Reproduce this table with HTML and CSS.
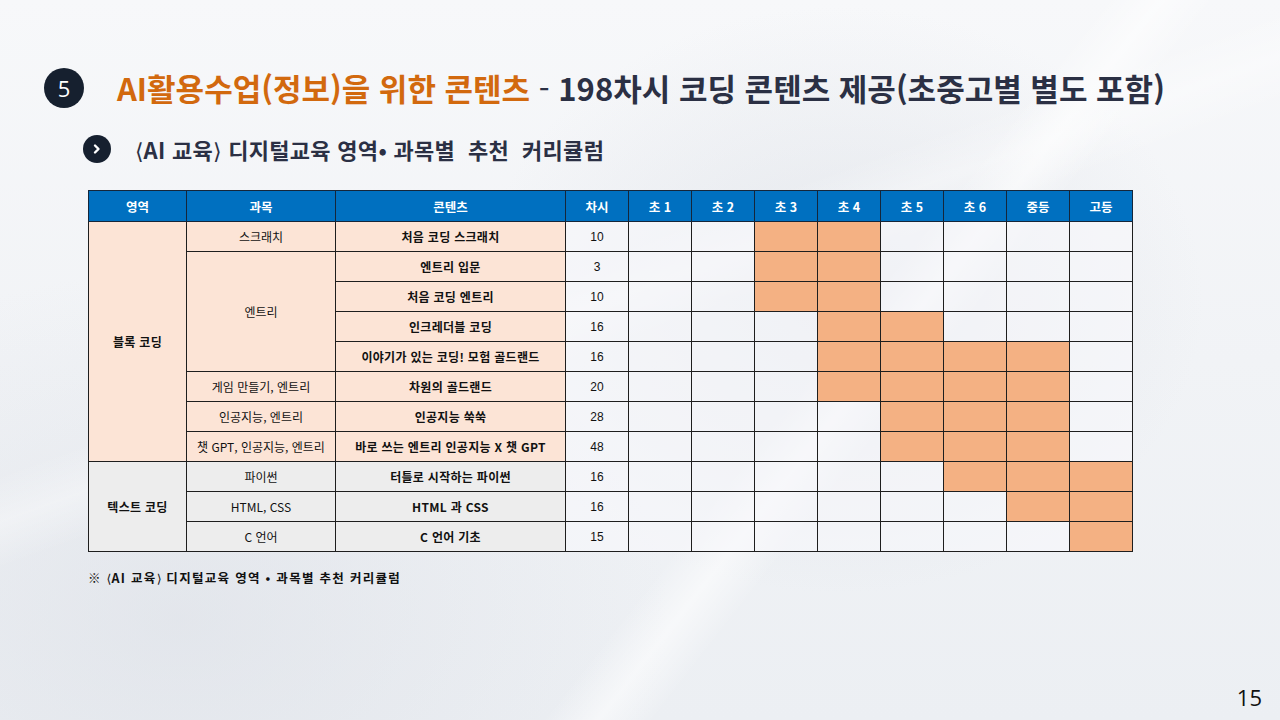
FILE: index.html
```html
<!DOCTYPE html>
<html lang="ko">
<head>
<meta charset="utf-8">
<link rel="stylesheet" href="styles.css">
</head>
<body>
<div class="slide">
  <div class="bg-deco"></div>
  <header class="title-row">
    <span class="num-badge">5</span>
    <h1 class="title"><span class="accent">AI활용수업(정보)을 위한 콘텐츠</span> <span class="dash">-</span> 198차시 코딩 콘텐츠 제공(초중고별 별도 포함)</h1>
  </header>
  <div class="sub-row">
    <span class="chev-badge"><svg width="12" height="12" viewBox="0 0 12 12"><path d="M4 2.5 L7.5 6 L4 9.5" fill="none" stroke="#fff" stroke-width="2.4" stroke-linecap="round" stroke-linejoin="round"/></svg></span>
    <h2 class="subtitle"><span class="br">⟨</span>AI 교육<span class="br">⟩</span> 디지털교육 영역• 과목별&nbsp; 추천&nbsp; 커리큘럼</h2>
  </div>
  <table class="grid">
    <colgroup>
      <col class="c-area"><col class="c-subj"><col class="c-cont"><col class="c-n">
      <col class="c-g"><col class="c-g"><col class="c-g"><col class="c-g"><col class="c-g"><col class="c-g"><col class="c-g"><col class="c-g">
    </colgroup>
    <thead>
      <tr><th>영역</th><th>과목</th><th>콘텐츠</th><th>차시</th><th>초 1</th><th>초 2</th><th>초 3</th><th>초 4</th><th>초 5</th><th>초 6</th><th>중등</th><th>고등</th></tr>
    </thead>
    <tbody>
      <tr><td class="pk b" rowspan="8">블록 코딩</td><td class="pk">스크래치</td><td class="pk b">처음 코딩 스크래치</td><td class="n">10</td><td></td><td></td><td class="on"></td><td class="on"></td><td></td><td></td><td></td><td></td></tr>
      <tr><td class="pk" rowspan="4">엔트리</td><td class="pk b">엔트리 입문</td><td class="n">3</td><td></td><td></td><td class="on"></td><td class="on"></td><td></td><td></td><td></td><td></td></tr>
      <tr><td class="pk b">처음 코딩 엔트리</td><td class="n">10</td><td></td><td></td><td class="on"></td><td class="on"></td><td></td><td></td><td></td><td></td></tr>
      <tr><td class="pk b">인크레더블 코딩</td><td class="n">16</td><td></td><td></td><td></td><td class="on"></td><td class="on"></td><td></td><td></td><td></td></tr>
      <tr><td class="pk b">이야기가 있는 코딩! 모험 골드랜드</td><td class="n">16</td><td></td><td></td><td></td><td class="on"></td><td class="on"></td><td class="on"></td><td class="on"></td><td></td></tr>
      <tr><td class="pk">게임 만들기, 엔트리</td><td class="pk b">차원의 골드랜드</td><td class="n">20</td><td></td><td></td><td></td><td class="on"></td><td class="on"></td><td class="on"></td><td class="on"></td><td></td></tr>
      <tr><td class="pk">인공지능, 엔트리</td><td class="pk b">인공지능 쑥쑥</td><td class="n">28</td><td></td><td></td><td></td><td></td><td class="on"></td><td class="on"></td><td class="on"></td><td></td></tr>
      <tr><td class="pk">챗 GPT, 인공지능, 엔트리</td><td class="pk b">바로 쓰는 엔트리 인공지능 X 챗 GPT</td><td class="n">48</td><td></td><td></td><td></td><td></td><td class="on"></td><td class="on"></td><td class="on"></td><td></td></tr>
      <tr><td class="gy b" rowspan="3">텍스트 코딩</td><td class="gy">파이썬</td><td class="gy b">터틀로 시작하는 파이썬</td><td class="n">16</td><td></td><td></td><td></td><td></td><td></td><td class="on"></td><td class="on"></td><td class="on"></td></tr>
      <tr><td class="gy">HTML, CSS</td><td class="gy b">HTML 과 CSS</td><td class="n">16</td><td></td><td></td><td></td><td></td><td></td><td></td><td class="on"></td><td class="on"></td></tr>
      <tr><td class="gy">C 언어</td><td class="gy b">C 언어 기초</td><td class="n">15</td><td></td><td></td><td></td><td></td><td></td><td></td><td></td><td class="on"></td></tr>
    </tbody>
  </table>
  <p class="note">※ <span class="br">⟨</span>AI 교육<span class="br">⟩</span> 디지털교육 영역 • 과목별 추천 커리큘럼</p>
  <div class="page-num">15</div>
</div>
</body>
</html>
```

FILE: styles.css
```css
* { box-sizing: border-box; }
html, body { margin: 0; padding: 0; }
body {
  width: 1280px;
  height: 720px;
  overflow: hidden;
  font-family: "Noto Sans CJK KR", "Noto Sans", sans-serif;
}
.slide {
  position: relative;
  width: 1280px;
  height: 720px;
  padding: 66px 0 0 44px;
  background:
    radial-gradient(ellipse 520px 420px at 840px 300px, rgba(200,206,216,0.35), rgba(255,255,255,0) 70%),
    radial-gradient(ellipse 700px 500px at 180px 620px, rgba(214,218,226,0.45), rgba(255,255,255,0) 70%),
    linear-gradient(180deg, #f7f8fa 0%, #f1f3f6 50%, #eceff3 100%);
}
.bg-deco {
  position: absolute;
  inset: 0;
  pointer-events: none;
  background:
    linear-gradient(128deg, rgba(255,255,255,0) 60%, rgba(255,255,255,0.55) 63%, rgba(255,255,255,0) 66%),
    linear-gradient(160deg, rgba(255,255,255,0) 40%, rgba(255,255,255,0.35) 44%, rgba(255,255,255,0) 48%);
}
.title-row {
  position: relative;
  display: flex;
  align-items: center;
  height: 44px;
}
.num-badge {
  flex: none;
  width: 40px;
  height: 40px;
  border-radius: 50%;
  background: #16202f;
  color: #fff;
  font-family: "Open Sans", "Noto Sans", sans-serif;
  font-size: 22px;
  line-height: 40px;
  text-align: center;
}
.title {
  margin: 0 0 0 33px;
  font-size: 31px;
  font-weight: 700;
  letter-spacing: 0;
  color: #2b3044;
  white-space: nowrap;
  line-height: 44px;
}
.accent { color: #d2690e; }
.dash { font-weight: 400; }
.sub-row {
  position: relative;
  display: flex;
  align-items: center;
  margin: 24px 0 0 39px;
  height: 30px;
}
.chev-badge {
  flex: none;
  width: 28px;
  height: 28px;
  border-radius: 50%;
  background: #16202f;
  display: flex;
  align-items: center;
  justify-content: center;
}
.subtitle {
  margin: 0 0 0 24px;
  font-size: 22px;
  font-weight: 700;
  letter-spacing: 0.3px;
  color: #2b3044;
  white-space: nowrap;
}
.br {
  font-family: "DejaVu Sans", sans-serif;
  font-weight: 400;
  letter-spacing: 0;
}
.grid {
  position: relative;
  margin: 26px 0 0 44px;
  border-collapse: collapse;
  table-layout: fixed;
  width: 1045px;
  font-size: 12px;
  color: #111;
}
.c-area { width: 98px; }
.c-subj { width: 149px; }
.c-cont { width: 230px; }
.c-n { width: 63px; }
.c-g { width: 63px; }
.grid th, .grid td {
  height: 30px;
  border: 1px solid #1e1e1e;
  text-align: center;
  vertical-align: middle;
  padding: 0 2px;
  white-space: nowrap;
}
.grid th {
  height: 31px;
  background: #0070c0;
  color: #fff;
  font-weight: 700;
  font-size: 12.5px;
  border-color: #15263a;
}
.grid td { background: rgba(248,249,251,0.6); }
.grid td.pk { background: #fce4d6; }
.grid td.gy { background: #ededed; }
.grid td.on { background: #f4b183; }
.grid td.b { font-weight: 700; letter-spacing: 0.3px; }
.grid td.n { font-family: "Liberation Sans", "Noto Sans", sans-serif; font-size: 12px; }
.note {
  position: relative;
  margin: 16px 0 0 44px;
  font-size: 12.5px;
  font-weight: 700;
  color: #111;
  letter-spacing: 1.3px;
}
.page-num {
  position: absolute;
  right: 18px;
  bottom: 8px;
  font-family: "Open Sans", "Noto Sans", sans-serif;
  font-size: 22px;
  color: #111;
}
```
